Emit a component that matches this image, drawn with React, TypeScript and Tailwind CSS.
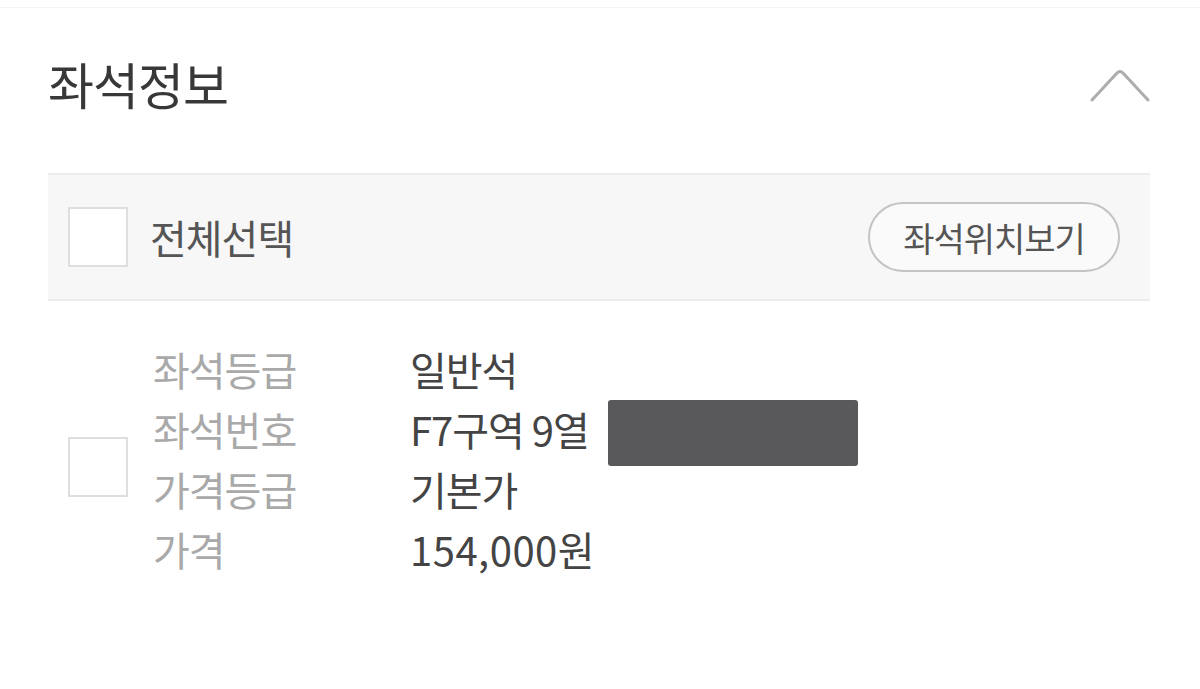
const rows = [
  { label: '좌석등급', value: '일반석' },
  { label: '좌석번호', value: 'F7구역 9열', masked: true },
  { label: '가격등급', value: '기본가' },
  { label: '가격', value: '154,000원', wide: true },
];

export default function App() {
  return (
    <div className="w-[1200px] h-[689px] bg-white overflow-hidden font-['Noto_Sans_CJK_KR','Noto_Sans',sans-serif]">
      <div className="h-[8px] border-b border-[#f3f3f3]" />

      {/* Header */}
      <div className="flex items-center justify-between pl-[48px] pr-[50px] h-[165px]">
        <h2 className="text-[50px] leading-none tracking-[-1px] text-[#383838] font-normal -mt-[16px]">좌석정보</h2>
        <svg width="60" height="36" viewBox="0 0 60 36" className="-mt-[12px]" fill="none">
          <path d="M2 33 L27 6 Q30 3 33 6 L58 33" stroke="#acacac" strokeWidth="3" strokeLinecap="round" strokeLinejoin="round" />
        </svg>
      </div>

      <div className="ml-[48px] mr-[50px]">
        {/* Select all bar */}
        <div className="flex items-center justify-between h-[128px] bg-[#f7f7f7] border-y-2 border-[#ececec] pl-[20px] pr-[30px]">
          <div className="flex items-center gap-[22px]">
            <div className="w-[60px] h-[60px] bg-white border-2 border-[#dedede]" />
            <span className="text-[40px] tracking-[-1px] text-[#555]">전체선택</span>
          </div>
          <button className="h-[70px] w-[252px] rounded-full border-2 border-[#c4c4c4] bg-white/40 text-[34px] tracking-[-1px] text-[#555]">
            좌석위치보기
          </button>
        </div>

        {/* Seat item */}
        <div className="flex items-center pl-[20px] pt-[38px]">
          <div className="w-[60px] h-[60px] mt-[16px] bg-white border-2 border-[#dedede] shrink-0" />
          <div className="ml-[25px] flex flex-col">
            {rows.map((r) => (
              <div key={r.label} className="flex items-center h-[60px]">
                <span className="w-[257px] text-[40px] tracking-[-1px] text-[#a9a9a9]">{r.label}</span>
                <span className={`text-[40px] text-[#444] whitespace-pre ${r.wide ? 'tracking-[0.5px]' : 'tracking-[-1px]'}`}>{r.value}</span>
                {r.masked && <div className="ml-[19px] w-[250px] h-[66px] bg-[#59595b] rounded-[3px] mt-[8px]" />}
              </div>
            ))}
          </div>
        </div>
      </div>
    </div>
  );
}
